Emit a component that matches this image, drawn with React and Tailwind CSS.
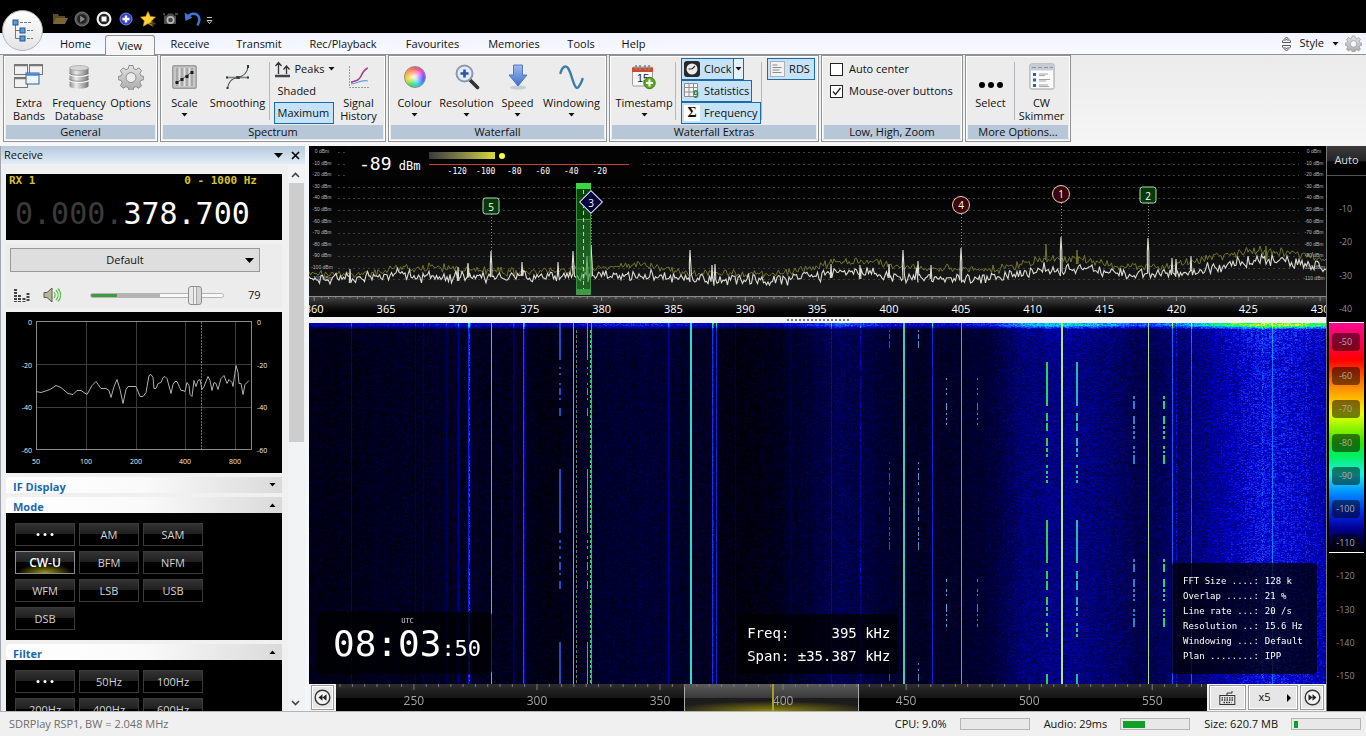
import { useEffect, useRef } from "react";

/* ---------- shared data and helpers ---------- */

const SPAN = 1017;
const pct = (x) => `${(x / SPAN) * 100}%`;
const freqX = (f) => 580 + (f - 400) * 14.37;

function makeRandom(seed) {
  let s = seed;
  return () => {
    s = (s * 1664525 + 1013904223) % 4294967296;
    return s / 4294967296;
  };
}

function lerpTable(table, x) {
  for (let i = 1; i < table.length; i++) {
    if (x <= table[i][0]) {
      const [x0, y0] = table[i - 1];
      const [x1, y1] = table[i];
      return y0 + ((y1 - y0) * (x - x0)) / (x1 - x0);
    }
  }
  return table[table.length - 1][1];
}

const LIVE_FLOOR = [[0, 134], [60, 132], [80, 129], [170, 131], [300, 129], [340, 130], [400, 134], [470, 134], [510, 128], [550, 126], [600, 132], [680, 133], [730, 124], [780, 123], [810, 128], [870, 128], [900, 124], [940, 114], [970, 114], [1017, 122]];
const MAX_FLOOR = [[0, 128], [60, 127], [90, 122], [130, 121], [200, 126], [270, 123], [330, 118], [370, 126], [440, 128], [480, 127], [510, 119], [550, 115], [610, 123], [690, 123], [730, 114], [770, 112], [810, 121], [860, 120], [900, 112], [940, 105], [980, 106], [1017, 112]];
const PEAKS = [[41, 123], [149, 121], [159, 117], [182, 105], [213, 116], [249, 116], [264, 105], [278, 110], [282, 99], [381, 104], [403, 119], [406, 118], [522, 118], [551, 119], [580, 118], [594, 104], [609, 115], [622, 119], [652, 102], [752, 91], [839, 92], [863, 112], [867, 113], [882, 110]];
const MAX_PEAKS = [[737, 98], [768, 104], [957, 100], [159, 118], [282, 100]];

function tracePath(table, peaks, seed, jitter) {
  const rnd = makeRandom(seed);
  let d = "";
  for (let x = 0; x <= SPAN; x += 1.5) {
    let y = lerpTable(table, x) + (rnd() + rnd() - 1) * jitter;
    if (rnd() > 0.93) y += (rnd() - 0.6) * jitter;
    d += `${d ? "L" : "M"}${x.toFixed(1)} ${y.toFixed(1)}`;
    const p = peaks.find(([px]) => px >= x && px < x + 1.5);
    if (p) d += `L${p[0] - 0.7} ${p[1] + 14}L${p[0]} ${p[1]}L${p[0] + 0.8} ${p[1] + 14}`;
  }
  return d;
}

const LIVE_PATH = tracePath(LIVE_FLOOR, PEAKS, 11, 7);
const MAX_PATH = tracePath(MAX_FLOOR, MAX_PEAKS, 77, 5);

/* ---------- waterfall ---------- */

const PALETTE = [[0, 0, 0, 4], [0.2, 0, 0, 85], [0.4, 0, 0, 205], [0.55, 20, 70, 255], [0.7, 0, 195, 255], [0.8, 0, 255, 130], [0.9, 110, 255, 20], [1, 230, 255, 90]];

function colour(v) {
  const t = Math.max(0, Math.min(1, v));
  for (let i = 1; i < PALETTE.length; i++) {
    if (t <= PALETTE[i][0]) {
      const a = PALETTE[i - 1];
      const b = PALETTE[i];
      const k = (t - a[0]) / (b[0] - a[0]);
      return [1, 2, 3].map((c) => a[c] + (b[c] - a[c]) * k);
    }
  }
  return [230, 255, 90];
}

const NOISE = [[0, 0.04], [90, 0.07], [150, 0.08], [250, 0.04], [280, 0.09], [340, 0.12], [400, 0.07], [430, 0.03], [465, 0.05], [500, 0.12], [530, 0.19], [560, 0.14], [600, 0.08], [640, 0.08], [680, 0.12], [710, 0.24], [755, 0.29], [800, 0.24], [830, 0.17], [870, 0.22], [900, 0.3], [930, 0.37], [948, 0.42], [975, 0.42], [1000, 0.37], [1017, 0.35]];

const LINES = [
  [42, 0.32], [106, 0.22], [114, 0.22], [137, 0.24], [149, 0.32], [159, 0.5], [160, 0.62, 1], [161, 0.24], [204, 0.26], [205, 0.2], [214, 0.58], [215, 0.4], [359, 0.33], [360, 0.24],
  [403, 0.54], [404, 0.48, 1], [407, 0.5], [426, 0.19], [481, 0.2], [522, 0.42], [551, 0.46, 1], [623, 0.5],
  [863, 0.6], [867, 0.5, 1], [882, 0.6], [897, 0.4, 1], [963, 0.64], [953, 0.62, 1], [954, 0.58, 1], [997, 0.54, 1],
];
const SOLID = [[182, 1, "#45b8e6"], [264, 1, "#49c6a0"], [282, 1, "#37b86c"], [381, 2, "#27ddd0"], [594, 2, "#45cdb4"], [652, 1, "#4ab878"], [752, 1, "#8cff5a"], [753, 1, "#b8e87a"], [839, 1, "#9fe0a0"]];

const SEG_A = [[0, 37], [44, 46], [50, 52], [60, 62], [65, 72], [75, 77], [85, 93], [146, 210], [217, 220], [223, 226], [233, 236], [239, 247], [250, 252], [258, 266], [319, 361]];
const SEG_B = [[7, 9], [11, 16], [18, 25], [139, 141], [145, 147], [150, 157], [159, 162], [169, 172], [175, 178], [184, 192], [194, 198], [204, 207], [209, 213], [215, 217], [219, 227], [340, 342], [346, 348], [351, 358]];
const SEG_C = [[55, 57], [65, 67], [70, 72], [80, 87], [90, 92], [95, 97], [100, 102], [256, 259], [266, 269], [271, 273], [281, 289], [291, 293], [296, 298], [301, 304]];
const SEG_D = [[39, 83], [90, 98], [100, 108], [115, 123], [125, 129], [131, 134], [142, 145], [148, 151], [153, 155], [157, 160], [197, 240], [248, 256], [258, 267], [274, 282], [284, 288], [290, 293], [300, 303], [305, 309], [311, 314], [351, 361]];
const SEG_E = [[73, 76], [78, 86], [93, 101], [103, 106], [108, 111], [113, 116], [123, 126], [128, 130], [132, 141], [236, 239], [241, 249], [256, 264], [266, 269], [271, 274], [276, 278], [286, 289], [291, 293], [295, 304]];
const DASHED = [[250, 2, SEG_A, "#1c50c8"], [278, 1, SEG_A, "#4c94d4"], [580, 1, SEG_B, "#2c56a8"], [609, 1, SEG_B, "#4c93c8"], [637, 1, SEG_C, "#50a4dc"], [668, 1, SEG_C, "#4a78c8"], [737, 2, SEG_D, "#2fd050"], [767, 2, SEG_D, "#22b6b4"], [824, 2, SEG_E, "#2c80c8"], [854, 2, SEG_E, "#1fd48c"]];

function paintWaterfall(canvas) {
  const w = canvas.width;
  const h = canvas.height;
  const ctx = canvas.getContext("2d");
  const img = ctx.createImageData(w, h);
  const rnd = makeRandom(2024);
  const extra = {};
  LINES.forEach(([x, v, dotted]) => (extra[x] = [v, dotted]));
  const column = [];
  for (let x = 0; x < w; x++) column.push(lerpTable(NOISE, x) + (rnd() - 0.5) * 0.03);
  for (let y = 0; y < h; y++) {
    let prev = 0;
    for (let x = 0; x < w; x++) {
      const base = column[x];
      const r = rnd();
      prev = x % 2 ? prev * 0.5 + r * 0.5 : r;
      let v = base + (prev - 0.5) * (0.13 + base * 0.3);
      if (extra[x]) v = extra[x][1] ? extra[x][0] - rnd() * 0.28 : extra[x][0] - rnd() * 0.06;
      if (y < 6) v += (0.27 + base * 0.6) * (y < 3 ? 1 : (7 - y) / 5);
      else if (y < 40) v += base * 0.15 * (1 - y / 40);
      const c = colour(v);
      const i = (y * w + x) * 4;
      img.data[i] = c[0];
      img.data[i + 1] = c[1];
      img.data[i + 2] = c[2];
      img.data[i + 3] = 255;
    }
  }
  ctx.putImageData(img, 0, 0);
  SOLID.forEach(([x, lw, c]) => {
    ctx.fillStyle = c;
    ctx.fillRect(x, 0, lw, h);
  });
  DASHED.forEach(([x, lw, segments, c]) => {
    ctx.fillStyle = c;
    segments.forEach(([a, b]) => ctx.fillRect(x, a, lw, b - a));
  });
  for (let y = 7; y < h; y += 5) {
    ctx.fillStyle = "#6a7a60";
    ctx.fillRect(267, y, 1, 3);
    ctx.fillStyle = "#2fe060";
    ctx.fillRect(281, y, 1, 3);
  }
}

function Waterfall() {
  const ref = useRef(null);
  useEffect(() => paintWaterfall(ref.current), []);
  return <canvas ref={ref} width={1017} height={361} aria-label="Waterfall" className="absolute inset-0 h-full w-full" />;
}

/* ---------- small glyphs ---------- */

const Down = ({ className = "" }) => (
  <svg width="7" height="4" viewBox="0 0 7 4" className={`shrink-0 ${className}`} aria-hidden="true"><path d="M0.5 0h6L3.5 3.6z" fill="currentColor" /></svg>
);

const Up = () => (
  <svg width="7" height="4" viewBox="0 0 7 4" aria-hidden="true"><path d="M0.5 4h6L3.5 0.4z" fill="#000" /></svg>
);

const Gear = ({ size = 26 }) => (
  <svg width={size} height={size} viewBox="0 0 26 26" aria-hidden="true">
    <defs><linearGradient id="gearFill" x1="0" y1="0" x2="0" y2="1"><stop offset="0" stopColor="#e4e4e4" /><stop offset="1" stopColor="#a9a9a9" /></linearGradient></defs>
    <path fillRule="evenodd" fill="url(#gearFill)" stroke="#8c8c8c" strokeWidth="1" strokeLinejoin="round" d="M11 1.5h4l.7 3.2 2.3 1 2.9-1.8 2.7 2.8-1.8 2.8 1 2.3 2.9.7v3.2l-2.9.8-1 2.3 1.8 2.8-2.7 2.7-2.9-1.7-2.3 1-.7 3h-4l-.7-3-2.3-1-2.9 1.7-2.7-2.7 1.8-2.8-1-2.3-2.9-.8v-3.2l2.9-.7 1-2.3-1.8-2.8 2.7-2.8 2.9 1.8 2.3-1zM13 8.6a5 5 0 1 0 0 10 5 5 0 1 0 0-10z" />
  </svg>
);

const icons = {
  bands: (
    <svg width="30" height="26" viewBox="0 0 30 26">
      <g fill="#f2f2f2" stroke="#777"><rect x=".5" y=".5" width="13" height="10" /><rect x="15.500" y=".5" width="13" height="10" /><rect x=".5" y="13.500" width="13" height="10" /></g>
      <path d="M0 1.500h14M15 1.500h14M0 14.500h14" stroke="#777" strokeWidth="1.500" />
      <rect x="12" y="9" width="13" height="11" fill="#eef5ff" stroke="#2f5f9f" /><path d="M12 10.500h13" stroke="#4a86d0" strokeWidth="2.500" />
    </svg>
  ),
  database: (
    <svg width="20" height="24" viewBox="0 0 20 24">
      <defs><linearGradient id="db"><stop offset="0" stopColor="#8f8f8f" /><stop offset=".35" stopColor="#ececec" /><stop offset="1" stopColor="#747474" /></linearGradient></defs>
      <path d="M.5 3v18c0 3.500 19 3.500 19 0V3z" fill="url(#db)" /><ellipse cx="10" cy="3" rx="9.500" ry="2.500" fill="#d6d6d6" stroke="#999" strokeWidth=".6" />
      <path d="M.5 9c0 3 19 3 19 0M.5 15c0 3 19 3 19 0" fill="none" stroke="#fff" strokeWidth="1.200" /><path d="M.5 8c0 3 19 3 19 0M.5 14c0 3 19 3 19 0" fill="none" stroke="#777" strokeWidth=".7" />
    </svg>
  ),
  options: <Gear size={26} />,
  scale: (
    <svg width="25" height="24" viewBox="0 0 25 24">
      <rect x=".7" y=".7" width="23.500" height="22.500" rx="1.500" fill="#c6c6c6" stroke="#9c9c9c" strokeWidth="1.400" />
      <path d="M5 3v18M10 3v18M15 3v18M20 3v18" stroke="#8a8a8a" /><path d="M7.500 3v18M12.500 3v18M17.500 3v18" stroke="#e2e2e2" />
      <path d="M5 17.500L20 7" stroke="#444" strokeWidth=".8" />
      <path d="M3.500 16h3v3h-3zM8.500 13h3v3h-3zM13.500 10h3v3h-3zM18.500 6h3v3h-3z" fill="#1c1c1c" />
    </svg>
  ),
  smoothing: (
    <svg width="26" height="26" viewBox="0 0 26 26" fill="none" stroke="#4d4d4d">
      <path d="M2 13.500h21" strokeWidth="1.600" stroke="#7d8587" /><path d="M2.500 24c2-8 5-9.500 10-10.500S22 10 23 3" strokeWidth="1.100" />
      <path d="M11.500 12.500h3v2h-3z" fill="#333" /><path d="M22 1h2v3h-2zM1.500 23h2v2h-2zM1 12.500h2v2H1zM22 12.500h2v2h-2z" fill="#333" stroke="none" />
    </svg>
  ),
  history: (
    <svg width="22" height="24" viewBox="0 0 22 24" fill="none">
      <path d="M1.500 1v21.500h20" stroke="#9a9a9a" strokeDasharray="2 1" /><path d="M3 17c6-1 8-2 10-6s3-7 7-8" stroke="#d0406a" strokeWidth="1.500" /><path d="M3 18c4-3 7-2 9-5s3-7 7-9" stroke="#8a3fb0" strokeWidth="1" /><path d="M3 19c6 0 10-5 17-3" stroke="#6a9be0" strokeWidth="1.200" />
    </svg>
  ),
  arrow: (
    <svg width="20" height="26" viewBox="0 0 20 26">
      <defs><linearGradient id="arrowFill" x1="0" y1="0" x2="0" y2="1"><stop offset="0" stopColor="#9dbdf0" /><stop offset="1" stopColor="#3f6fc8" /></linearGradient></defs>
      <ellipse cx="10" cy="23.500" rx="8" ry="2" fill="#c4ccd8" /><path d="M5.500 1h9v10H19l-9 11L1 11h4.500z" fill="url(#arrowFill)" stroke="#3d66b4" strokeWidth=".8" />
    </svg>
  ),
  zoom: (
    <svg width="26" height="26" viewBox="0 0 26 26">
      <path d="M16 16l7.500 7.500" stroke="#333" strokeWidth="3.600" strokeLinecap="round" /><circle cx="10.500" cy="9.500" r="8" fill="#e2ecfa" stroke="#8d98a8" strokeWidth="2" />
      <path d="M10.500 5.500v8M6.500 9.500h8" stroke="#2855a8" strokeWidth="2.600" />
    </svg>
  ),
  wave: (
    <svg width="25" height="26" viewBox="0 0 25 26"><path d="M1.500 9C4 1 8 0 11 8s5 19 8.500 15c2.500-3 3-5 4-8" fill="none" stroke="#3d7da8" strokeWidth="2.400" strokeLinecap="round" /></svg>
  ),
  calendar: (
    <svg width="26" height="26" viewBox="0 0 26 26">
      <rect x="1.500" y="3" width="20" height="19" rx="1.500" fill="#fafafa" stroke="#a59d97" /><path d="M1 3.500h21V8H1z" fill="#d24a2c" /><path d="M5 1v5M9 1v5M14 1v5M18 1v5" stroke="#7d8a90" strokeWidth="1.600" />
      <text x="6" y="18" fontSize="11" fontFamily="Liberation Sans, sans-serif" fill="#222">15</text>
      <circle cx="18.500" cy="19" r="5.700" fill="#5fa822" stroke="#3c7a12" /><path d="M18.500 15.500v7M15 19h7" stroke="#fff" strokeWidth="2" />
    </svg>
  ),
  skimmer: (
    <svg width="28" height="28" viewBox="0 0 28 28">
      <rect x="2" y="1" width="24" height="25" rx="1.500" fill="#fdfdfd" stroke="#979ba1" /><path d="M2.500 1.500h23v6h-23z" fill="#c5ccd6" /><path d="M4 4.500h4M10 4.500h4M16 4.500h4M22 4.500h3" stroke="#8b95a3" strokeWidth="1.200" />
      <path d="M5 10h3v3H5zM5 15.500h3v3H5zM5 21h3v3H5z" fill="#2c62ae" /><path d="M11 11h9M11 12.600h6M11 16.500h11M11 18h7M11 22h9M11 23.600h10" stroke="#a3a3a3" />
    </svg>
  ),
};

/* ---------- ribbon pieces ---------- */

function Group({ title, className, children }) {
  return (
    <section className={`flex h-[87px] flex-col border border-[#8f9193] bg-[#ececec] p-[2px] shadow-[inset_0_0_0_1px_#fff] ${className}`}>
      <div className="flex h-[67px] shrink-0 items-start justify-center">{children}</div>
      <h2 className="h-[14px] shrink-0 bg-[#b7c7d7] text-center leading-[14px]">{title}</h2>
    </section>
  );
}

function Tool({ icon, lines, menu, className = "w-[52px]" }) {
  return (
    <button type="button" className={`flex shrink-0 flex-col items-center pt-[3px] ${className}`}>
      <span className="flex h-8 items-center">{icon}</span>
      <span className="mt-[3px] leading-[13px]">
        {lines.map((l) => <span key={l} className="block whitespace-nowrap">{l}</span>)}
      </span>
      {menu && <Down className="mt-1" />}
    </button>
  );
}

const Divider = () => <span className="mt-1 h-[58px] w-px shrink-0 bg-[#b4b8bc]" />;
const ON = "border border-[#1c6aa8] bg-[#c6e2f7]";

function Ribbon() {
  return (
    <div className="flex h-[92px] shrink-0 gap-[2px] border-t border-[#8f9193] bg-linear-to-b from-[#ebebeb] to-[#f6f6f6] pl-[3px]">
      <Group title="General" className="w-[155px]">
        <Tool icon={icons.bands} lines={["Extra", "Bands"]} className="w-[46px]" />
        <Tool icon={icons.database} lines={["Frequency", "Database"]} className="w-[54px]" />
        <Tool icon={icons.options} lines={["Options"]} className="w-[49px]" />
      </Group>
      <Group title="Spectrum" className="w-[226px]">
        <Tool icon={icons.scale} lines={["Scale"]} menu className="w-[44px]" />
        <Tool icon={icons.smoothing} lines={["Smoothing"]} className="w-[62px]" />
        <Divider />
        <div className="ml-1 flex w-[60px] shrink-0 flex-col">
          <button type="button" className="flex h-[22px] items-center gap-1 whitespace-nowrap">
            <svg width="17" height="17" viewBox="0 0 17 17" fill="none" stroke="#333" className="shrink-0" aria-hidden="true"><path d="M4.500 13V2M1.500 5l3-3.500 3 3.500M12.500 13V5M9.500 8.500l3-3.500 3 3.500" strokeWidth="1.300" /><path d="M1 15h15" strokeWidth="2.500" stroke="#40474c" /></svg>
            Peaks<Down />
          </button>
          <button type="button" className="h-[22px] pl-1 text-left">Shaded</button>
          <button type="button" aria-pressed="true" className={`h-[22px] pl-[3px] text-left ${ON}`}>Maximum</button>
        </div>
        <Tool icon={icons.history} lines={["Signal", "History"]} className="w-[50px]" />
      </Group>
      <Group title="Waterfall" className="w-[219px]">
        <Tool icon={<span className="h-[22px] w-[22px] rounded-full border border-[#8b8b8b] bg-[radial-gradient(circle,#ffffffd0_10%,#ffffff00_60%),conic-gradient(#ff5a5a,#e048e0,#5a5aff,#30c8f0,#40e060,#f0e030,#ff9a4a,#ff5a5a)]" />} lines={["Colour"]} menu className="w-[46px]" />
        <Tool icon={icons.zoom} lines={["Resolution"]} menu className="w-[58px]" />
        <Tool icon={icons.arrow} lines={["Speed"]} menu className="w-[44px]" />
        <Tool icon={icons.wave} lines={["Windowing"]} menu className="w-[64px]" />
      </Group>
      <Group title="Waterfall Extras" className="w-[210px]">
        <Tool icon={icons.calendar} lines={["Timestamp"]} menu className="w-[62px]" />
        <Divider />
        <div className="ml-[5px] flex w-[80px] shrink-0 flex-col items-start">
          <div className={`flex h-[22px] ${ON}`}>
            <button type="button" className="flex items-center gap-1 pl-[2px] pr-[2px]">
              <svg width="16" height="16" viewBox="0 0 16 16" aria-hidden="true"><rect width="16" height="16" rx="3" fill="#26282a" /><circle cx="8" cy="8" r="5.500" fill="#ececec" /><path d="M8 8l3-3M8 8H4.500" stroke="#333" strokeWidth="1.200" /></svg>
              Clock
            </button>
            <button type="button" aria-label="Clock options" className="border-l border-[#1c6aa8] bg-[#e5f1fb] px-px"><Down /></button>
          </div>
          <button type="button" aria-pressed="true" className={`flex h-[22px] items-center gap-1 pl-[2px] pr-[2px] ${ON}`}>
            <svg width="16" height="16" viewBox="0 0 16 16" aria-hidden="true"><path d="M.5.5h13v13H.5zM.5 4.500h13M.5 9h13M5 .5v13M9.500.5v13" fill="#f4f4f4" stroke="#8a8f94" /><text x="9" y="15" fontSize="10" fontWeight="700" fontFamily="Liberation Sans, sans-serif" fill="#2f7d46">9</text></svg>
            Statistics
          </button>
          <button type="button" aria-pressed="true" className={`flex h-[22px] items-center gap-1 pl-[2px] pr-[2px] ${ON}`}>
            <span className="flex h-4 w-4 items-center justify-center bg-white font-['Liberation_Serif',serif] text-[14px] font-bold leading-none">Σ</span>
            Frequency
          </button>
        </div>
        <Divider />
        <button type="button" aria-pressed="true" className={`ml-[5px] flex h-[22px] items-center gap-1 pl-[2px] pr-1 ${ON}`}>
          <svg width="15" height="16" viewBox="0 0 15 16" aria-hidden="true"><rect x=".5" y=".5" width="14" height="15" fill="#f2f2f2" stroke="#b0b0b0" /><path d="M2.500 4h5M2.500 6.500h9M2.500 9h7M2.500 11.500h9" stroke="#8b8b8b" /></svg>
          RDS
        </button>
      </Group>
      <Group title="Low, High, Zoom" className="w-[142px]">
        <div className="flex w-full flex-col pl-[6px]">
          <Check id="auto-center" label="Auto center" />
          <Check id="mouse-over" label="Mouse-over buttons" checked />
        </div>
      </Group>
      <Group title="More Options..." className="w-[106px]">
        <Tool icon={<svg width="26" height="8" viewBox="0 0 26 8" className="mt-4"><circle cx="4" cy="4" r="3" /><circle cx="13" cy="4" r="3" /><circle cx="22" cy="4" r="3" /></svg>} lines={["Select"]} className="w-[46px]" />
        <Divider />
        <Tool icon={icons.skimmer} lines={["CW", "Skimmer"]} className="w-[54px]" />
      </Group>
    </div>
  );
}

function Check({ id, label, checked = false }) {
  return (
    <div className="flex h-[22px] items-center gap-[6px]">
      <span className="grid">
        <input id={id} type="checkbox" defaultChecked={checked} className="peer col-start-1 row-start-1 h-[13px] w-[13px] appearance-none border border-[#222] bg-white" />
        <svg viewBox="0 0 13 13" className="pointer-events-none invisible col-start-1 row-start-1 h-[13px] w-[13px] peer-checked:visible" aria-hidden="true"><path d="M3 6.500L5.500 9.500 10.500 3" fill="none" stroke="#222" strokeWidth="1.300" /></svg>
      </span>
      <label htmlFor={id} className="whitespace-nowrap">{label}</label>
    </div>
  );
}

const TABS = [["Home", "w-[59px]"], ["View", "w-[50px]"], ["Receive", "w-[70px]"], ["Transmit", "w-[68px]"], ["Rec/Playback", "w-[100px]"], ["Favourites", "w-[79px]"], ["Memories", "w-[84px]"], ["Tools", "w-[50px]"], ["Help", "w-[55px]"]];

function TitleBar() {
  return (
    <header className="relative shrink-0">
      <div className="flex h-[33px] items-center gap-[6px] bg-black pl-[52px] pt-1">
        <button type="button" aria-label="Open" className="h-4 w-4"><svg width="16" height="16" viewBox="0 0 16 16"><path d="M1 13V3h5l1 2h6v3" fill="#5c4a22" /><path d="M1 13l3-6h12l-3 6z" fill="#7b6536" /></svg></button>
        <button type="button" aria-label="Play" className="h-4 w-4"><svg width="16" height="16" viewBox="0 0 16 16"><circle cx="8" cy="8" r="7" fill="#555" stroke="#7a7a7a" /><circle cx="8" cy="8" r="4.800" fill="#222" /><path d="M6.200 4.800v6.400L11 8z" fill="#8d8d8d" /></svg></button>
        <button type="button" aria-label="Stop" className="h-4 w-4"><svg width="16" height="16" viewBox="0 0 16 16"><circle cx="8" cy="8" r="7.500" fill="#efefef" /><circle cx="8" cy="8" r="5.300" fill="#222" /><rect x="5.500" y="5.500" width="5" height="5" fill="#fff" /></svg></button>
        <button type="button" aria-label="Add" className="h-4 w-4"><svg width="16" height="16" viewBox="0 0 16 16"><circle cx="8" cy="8" r="6" fill="#3442c0" stroke="#7d88e0" /><path d="M8 4.500v7M4.500 8h7" stroke="#fff" strokeWidth="2.400" /></svg></button>
        <button type="button" aria-label="Add favourite" className="h-4 w-4"><svg width="16" height="16" viewBox="0 0 16 16"><path d="M8 .5l2.300 4.900 5.200.7-3.800 3.700 1 5.400L8 12.600l-4.700 2.600 1-5.400L.5 6.100l5.200-.7z" fill="#ffd23c" stroke="#c89018" strokeWidth=".6" /><path d="M12.500 9.500v6M9.500 12.500h6" stroke="#57431c" strokeWidth="1.800" /></svg></button>
        <button type="button" aria-label="Screenshot" className="h-4 w-4"><svg width="16" height="16" viewBox="0 0 16 16"><path d="M2 4.500h3l1-2h5l1 2h2V13H2z" fill="#4c4c4c" /><circle cx="8.500" cy="9" r="4" fill="#b8b8b8" /><circle cx="8.500" cy="9" r="2.300" fill="#444" /><path d="M1 3h2M13 3h3" stroke="#888" /></svg></button>
        <button type="button" aria-label="Undo" className="h-4 w-4"><svg width="17" height="16" viewBox="0 0 17 16"><path d="M4 5.500C10-.5 19 4 13.500 14.500" fill="none" stroke="#3f74d2" strokeWidth="2.600" /><path d="M.5 1.500l1 8.500 7-3.500z" fill="#3f74d2" /></svg></button>
        <button type="button" aria-label="Customize" className="h-4 w-2"><svg width="7" height="8" viewBox="0 0 7 8" className="mt-1"><path d="M1 .5h5M1 3.500h5L3.500 6.500z" fill="none" stroke="#c8c8c8" /></svg></button>
      </div>
      <nav className="flex h-[21px] items-stretch bg-linear-to-b from-[#f0f3ff] to-[#f7faff] pl-[46px]">
        {TABS.map(([name, w]) => (
          <button key={name} type="button" className={`${w} text-center ${name === "View" ? "mt-[2px] h-5 rounded-t-[3px] border border-b-0 border-[#8f9193] bg-[#f6f6f6] leading-[14px]" : "leading-[20px]"}`}>{name}</button>
        ))}
        <div className="ml-auto flex items-center gap-2 pr-1">
          <svg width="11" height="16" viewBox="0 0 11 16" fill="none" stroke="#555" aria-hidden="true"><path d="M5.500 1L9.500 5v1.500h-8V5zM5.500 15l4-4V9.500h-8V11z" /><path d="M3.500 5l2-2 2 2M3.500 11l2 2 2-2" /></svg>
          <button type="button" className="flex items-center gap-2">Style<Down /></button>
          <button type="button" aria-label="Settings" className="-ml-[2px]"><Gear size={17} /></button>
        </div>
      </nav>
      <button type="button" aria-label="Main menu" className="absolute left-[2px] top-[10px] flex h-[41px] w-[41px] items-center justify-center rounded-full border border-[#b4b4b4] bg-linear-to-b from-white to-[#e4e4e4]">
        <svg width="22" height="24" viewBox="0 0 22 24" fill="none" stroke="#777"><path d="M3.500 5v14.500H10M3.500 11.500H10" /><path d="M8 3.500h12M15 11.500h6M15 19.500h6" strokeDasharray="3 1" /><g fill="#5c9ad6" stroke="#22588f"><rect x="1" y="1" width="5" height="5" /><rect x="8" y="9" width="5" height="5" /><rect x="8" y="17" width="5" height="5" /></g></svg>
      </button>
    </header>
  );
}

/* ---------- receive panel ---------- */

function PadButton({ children, active }) {
  return (
    <button
      type="button"
      className={`h-[23px] w-[60px] border leading-[21px] ${active ? "border-[#8c8c8c] bg-[radial-gradient(ellipse_28px_9px_at_50%_100%,#a09a10,#00000000),linear-gradient(#363636,#222_48%,#000_50%)] text-[12px] font-semibold text-white" : "border-[#3a3a3a] bg-[linear-gradient(#333,#1f1f1f_48%,#000_50%)] text-[11px] text-[#d4d4d4]"}`}
    >
      {children}
    </button>
  );
}

const Dots = () => (
  <svg width="20" height="5" viewBox="0 0 20 5" fill="#fff" className="mx-auto" aria-label="More"><circle cx="3" cy="2.500" r="1.500" /><circle cx="10" cy="2.500" r="1.500" /><circle cx="17" cy="2.500" r="1.500" /></svg>
);

function Section({ title, open, className = "" }) {
  return (
    <button type="button" className={`flex h-4 w-full shrink-0 items-center justify-between rounded-tl bg-linear-to-r from-white via-[#fafafa] to-[#dadada] pl-[7px] pr-[6px] text-[11px] font-bold leading-4 text-[#1a69ae] ${className}`}>
      <span className="pt-1">{title}</span>
      {open ? <Up /> : <Down className="text-black" />}
    </button>
  );
}

const AUDIO = "M36 391.500l5 1 9-3 6-4 5 2 7 6 5 1 4-4h4l6 4 5-9 4-4 5 7h5l3 2 2 7 3-11 3-7 3 10 3 14 3-14 2-3h8l4 10h3l3-4 3-17 2-1 2 3 1 11h2l2-5 3-1 2-5 2-1 2 2 4 15 2-9 2-3h2l4 9h2l2 1 2-9 2 3 1 9 2 2 2-16 2 6 2-6 2-1 2 10 2-3 4-10 2 4 2 10 2-8 2 1 2 6 3-11 3-3 3 8 2-4 3 3 1 4 3-21 2 7 1 11h2l2 11 2-10 4-4";

function AudioChart() {
  const xs = [["50", 36], ["100", 86], ["200", 136], ["400", 185], ["800", 235]];
  return (
    <svg viewBox="6 312 276 161" className="block h-[161px] w-full shrink-0 bg-black" role="img" aria-label="Audio spectrum">
      <g fill="none" stroke="#3c3c3c"><path d="M86.500 322v127.500M136.500 322v127.500M185.500 322v127.500M235.500 322v127.500M36 364.500h215M36 407.500h215" /></g>
      <rect x="36.500" y="321.500" width="215" height="128" fill="none" stroke="#8a8a8a" />
      <path d="M201.500 322v127" stroke="#77773c" strokeDasharray="2 1" />
      <path d={AUDIO} fill="none" stroke="#b0b0b0" />
      <g fill="#eee" fontSize="7" fontFamily="Open Sans, sans-serif">
        {["0", "-20", "-40", "-60"].map((t, i) => (
          <g key={t}><text x="32" y={325 + i * 42.500} textAnchor="end">{t}</text><text x="257" y={325 + i * 42.500}>{t}</text></g>
        ))}
        {xs.map(([t, x]) => <text key={t} x={x} y="464" textAnchor="middle">{t}</text>)}
      </g>
    </svg>
  );
}

function ReceivePanel() {
  return (
    <aside className="flex w-[305px] shrink-0 flex-col border-l border-[#a0a6ac] bg-[#f2f3f5]">
      <div className="flex h-[18px] shrink-0 items-center bg-linear-to-b from-[#b4c9dc] to-[#e3edf6] pl-[3px] pr-[5px]">
        <h2 className="flex-1">Receive</h2>
        <button type="button" aria-label="Panel menu"><svg width="9" height="5" viewBox="0 0 9 5"><path d="M0 0h9L4.500 5z" /></svg></button>
        <button type="button" aria-label="Close panel" className="ml-2"><svg width="9" height="9" viewBox="0 0 9 9"><path d="M1 1l7 7M8 1L1 8" stroke="#000" strokeWidth="1.600" /></svg></button>
      </div>
      <div className="flex min-h-0 flex-1">
        <div className="flex min-h-0 w-[287px] shrink-0 flex-col overflow-hidden bg-[#f0f0f0] pl-[5px] pr-[6px] pt-[10px]">
          <div className="h-[66px] shrink-0 bg-black font-['DejaVu_Sans_Mono',monospace]">
            <div className="flex justify-between pl-[3px] pr-[25px] text-[11px] font-bold leading-[14px] text-[#d8c428]"><span>RX 1</span><span>0 - 1000 Hz</span></div>
            <div className="mt-2 whitespace-nowrap pl-[9px] text-[30px] leading-9"><span className="text-[#3a3a3a]">0.000.</span><span className="text-white">378.700</span></div>
          </div>
          <div className="mt-1 h-[64px] shrink-0 bg-[#ececec] px-1 pt-1">
            <div className="grid w-[250px] items-center">
              <select aria-label="Audio output" className="col-start-1 row-start-1 h-6 appearance-none border border-[#9a9a9a] bg-[#dedede] pr-5 text-center text-[11px]"><option>Default</option></select>
              <svg width="9" height="5" viewBox="0 0 9 5" className="pointer-events-none col-start-1 row-start-1 mr-[6px] justify-self-end"><path d="M0 0h9L4.500 5z" /></svg>
            </div>
            <div className="mt-[13px] flex h-5 items-center pl-1">
              <svg width="16" height="13" viewBox="0 0 16 13" aria-hidden="true"><path d="M1.500 0v13M5.500 6v7M10 9v4M14 4v9" stroke="#444" strokeWidth="3" strokeDasharray="2 1" /></svg>
              <button type="button" aria-label="Mute" className="ml-[13px]"><svg width="18" height="16" viewBox="0 0 18 16"><path d="M1 5.500h3L9 1v14l-5-4.500H1z" fill="#b9b49c" stroke="#5b5a50" /><path d="M11 5c1.500 2 1.500 4 0 6M13 3c2.700 3 2.700 7 0 10M15 1.500c3.300 4 3.300 9 0 13" fill="none" stroke="#5cc24c" strokeWidth="1.200" /></svg></button>
              <input
                type="range" aria-label="Volume" defaultValue={82}
                className="ml-[29px] h-5 w-[134px] appearance-none bg-transparent [&::-webkit-slider-runnable-track]:h-[5px] [&::-webkit-slider-runnable-track]:rounded-sm [&::-webkit-slider-runnable-track]:border [&::-webkit-slider-runnable-track]:border-[#b4b4b4] [&::-webkit-slider-runnable-track]:bg-[linear-gradient(90deg,#3f9a40_20%,#b4b4b4_20%,#b4b4b4_52%,#f8f8f8_52%)] [&::-webkit-slider-thumb]:-mt-2 [&::-webkit-slider-thumb]:h-[19px] [&::-webkit-slider-thumb]:w-[14px] [&::-webkit-slider-thumb]:appearance-none [&::-webkit-slider-thumb]:rounded-[3px] [&::-webkit-slider-thumb]:border [&::-webkit-slider-thumb]:border-[#8f8f8f] [&::-webkit-slider-thumb]:bg-[linear-gradient(90deg,#e8e8e8_35%,#aaa_35%,#aaa_45%,#eee_45%,#eee_55%,#aaa_55%,#aaa_65%,#d4d4d4_65%)]"
              />
              <output className="ml-6 text-[11px]">79</output>
            </div>
          </div>
          <div className="mt-1 shrink-0"><AudioChart /></div>
          <Section title="IF Display" className="mt-1" />
          <Section title="Mode" open className="mt-1" />
          <div className="h-[127px] shrink-0 bg-black pl-[9px] pt-[10px]">
            <div className="grid w-[188px] grid-cols-3 gap-x-1 gap-y-[5px]">
              <PadButton><Dots /></PadButton><PadButton>AM</PadButton><PadButton>SAM</PadButton>
              <PadButton active>CW-U</PadButton><PadButton>BFM</PadButton><PadButton>NFM</PadButton>
              <PadButton>WFM</PadButton><PadButton>LSB</PadButton><PadButton>USB</PadButton>
              <PadButton>DSB</PadButton>
            </div>
          </div>
          <Section title="Filter" open className="mt-1" />
          <div className="min-h-0 flex-1 overflow-hidden bg-black pl-[9px] pt-[10px]">
            <div className="grid w-[188px] grid-cols-3 gap-x-1 gap-y-[5px]">
              <PadButton><Dots /></PadButton><PadButton>50Hz</PadButton><PadButton>100Hz</PadButton>
              <PadButton>200Hz</PadButton><PadButton>400Hz</PadButton><PadButton>600Hz</PadButton>
            </div>
          </div>
        </div>
        <div className="flex w-4 flex-col items-center">
          <svg width="16" height="19" viewBox="0 0 16 19" fill="none" stroke="#444" strokeWidth="1.600" aria-hidden="true"><path d="M4 13l3.500-3.500L11 13" /></svg>
          <div className="h-[259px] w-[15px] bg-[#cdcdcd]" />
          <svg width="16" height="17" viewBox="0 0 16 17" fill="none" stroke="#444" strokeWidth="1.600" className="mt-auto" aria-hidden="true"><path d="M4 7l3.500 3.500L11 7" /></svg>
        </div>
      </div>
    </aside>
  );
}

/* ---------- spectrum ---------- */

function Marker({ x, y, n, shape }) {
  const shapes = {
    square: "h-[17px] w-[17px] rounded-[3px] border border-[#b8d8b8] bg-[#063a0a]",
    circle: "h-[18px] w-[18px] rounded-full border border-[#e8d0d0] bg-[#3c0206]",
    diamond: "h-[17px] w-[17px] rotate-45 border border-[#e0e0f0] bg-[#04043c]",
  };
  return (
    <div className="absolute grid -translate-x-1/2 -translate-y-1/2 place-items-center" style={{ left: pct(x), top: y }}>
      <span className={`col-start-1 row-start-1 ${shapes[shape]}`} />
      <span className="z-10 col-start-1 row-start-1 text-[10px] leading-none text-white">{n}</span>
    </div>
  );
}

const DBM = ["0 dBm", "-10 dBm", "-20 dBm", "-30 dBm", "-40 dBm", "-50 dBm", "-60 dBm", "-70 dBm", "-80 dBm", "-90 dBm", "-100 dBm", "-110 dBm"];

function DbmColumn({ className }) {
  return (
    <div className={`absolute top-0 flex h-[139px] flex-col font-['Liberation_Sans',sans-serif] text-[5px] text-[#b8b8b8] ${className}`}>
      {DBM.map((t) => <span key={t} className="flex flex-1 items-center justify-center">{t}</span>)}
    </div>
  );
}

function Spectrum() {
  return (
    <div className="relative h-[150px] shrink-0 overflow-hidden bg-linear-to-b from-black via-[#0a0a0a] to-[#1a1a1a]">
      <svg viewBox="0 0 1017 150" preserveAspectRatio="none" className="absolute inset-0 h-full w-full" role="img" aria-label="Spectrum">
        <g stroke="#3f3f3f" strokeDasharray="2 3">{DBM.map((t, i) => <path key={t} d={`M29 ${Math.round(6 + i * 11.550) + 0.5}H990`} />)}</g>
        <g stroke="#8c8c8c" strokeDasharray="1 2"><path d="M182.500 68v38M652.500 68v36M752.500 57v34M839.500 57v35M282.500 66v34" /></g>
        <path d={MAX_PATH} fill="none" stroke="#74752a" />
        <path d={LIVE_PATH} fill="none" stroke="#dcdcd4" strokeWidth="1.100" />
        <rect x="267" y="37" width="15" height="111" fill="#0a7a10" fillOpacity=".55" /><rect x="267" y="73" width="15" height="70" fill="#9fe89f" fillOpacity=".12" />
        <path d="M267.500 37v111M281.500 37v111M267 73.500h15" stroke="#3c9440" />
        <path d="M274.500 44v99" stroke="#b4d4b4" strokeDasharray="4 3" />
        <rect x="267" y="37" width="15" height="6" fill="#38d840" /><rect x="267" y="143" width="15" height="6" fill="#3f9a48" />
      </svg>
      <DbmColumn className="left-0 w-[26px]" />
      <DbmColumn className="right-0 w-[24px]" />
      <div className="absolute left-[36px] top-0 flex h-[35px] w-[296px] items-start bg-[#030303] text-white">
        <div className="w-[84px] whitespace-nowrap pl-[14px] pt-[6px] font-['DejaVu_Sans_Mono',monospace] text-[12px] leading-6"><span className="text-[18px]">-89</span> dBm</div>
        <div className="w-[200px] pt-[6px]">
          <div className="flex items-center gap-1"><span className="h-[7px] w-[66px] bg-linear-to-r from-[#3a3a3a] to-[#d8d832]" /><span className="h-[6px] w-[6px] rounded-full bg-[#fdfd4a]" /></div>
          <div className="mt-[5px] h-px bg-[#c0403a]" />
          <div className="flex w-[185px] pl-[14px] font-['DejaVu_Sans_Mono',monospace] text-[8px] leading-[14px]">{["-120", "-100", "-80", "-60", "-40", "-20"].map((t) => <span key={t} className="flex-1 basis-0 text-center">{t}</span>)}</div>
        </div>
      </div>
      <Marker x={182} y={60} n="5" shape="square" />
      <Marker x={282} y={56} n="3" shape="diamond" />
      <Marker x={652} y={59} n="4" shape="circle" />
      <Marker x={752} y={48} n="1" shape="circle" />
      <Marker x={839} y={49} n="2" shape="square" />
    </div>
  );
}

function FrequencyRuler() {
  const ticks = [];
  for (let f = 360; f <= 430.5; f += 0.5) ticks.push(f);
  const labels = [360, 365, 370, 375, 380, 385, 390, 395, 400, 405, 410, 415, 420, 425, 430];
  return (
    <div className="relative h-[21px] shrink-0 overflow-hidden bg-linear-to-b from-[#4a4a4a] via-[#161616] to-black text-white">
      <svg className="absolute inset-0 h-full w-full" aria-hidden="true">
        <path d="M0 .5H3000" stroke="#8a8a8a" />
        {ticks.map((f) => <line key={f} x1={pct(freqX(f))} x2={pct(freqX(f))} y1="0" y2={f % 5 === 0 ? 5 : f % 1 === 0 ? 3 : 2} stroke="#8a8a8a" />)}
      </svg>
      {labels.map((f) => <span key={f} className="absolute top-[6px] -translate-x-1/2 text-[11px] leading-[14px]" style={{ left: pct(freqX(f)) }}>{f}</span>)}
    </div>
  );
}

const STATS = [["FFT Size ....:", "128 k"], ["Overlap .....:", "21 %"], ["Line rate ...:", "20 /s"], ["Resolution ..:", "15.6 Hz"], ["Windowing ...:", "Default"], ["Plan ........:", "IPP"]];

function BandNavigator() {
  const ticks = [];
  for (let f = 220; f <= 570; f += 5) ticks.push(f);
  const at = (f) => `${((78 + (f - 250) * 2.464) / 872) * 100}%`;
  const NAV = "flex items-center justify-center border border-[#9a9a9a] bg-[#e6e6e6] shadow-[inset_0_0_0_1px_#fff]";
  return (
    <div className="flex h-[27px] shrink-0 gap-[2px] bg-[#f2f2f2]">
      <button type="button" aria-label="Band down" className={`my-px ml-[2px] w-[23px] ${NAV}`}>
        <svg width="17" height="17" viewBox="0 0 17 17"><circle cx="8.500" cy="8.500" r="7.300" fill="#f4f4f4" stroke="#333" strokeWidth="1.400" /><path d="M8.500 5.200v6.600L4.500 8.500zM12.500 5.200v6.600L8.500 8.500z" fill="#222" /></svg>
      </button>
      <div className="relative flex-1 overflow-hidden bg-[linear-gradient(#2e2e2e,#141414_50%,#000_52%)] text-[#a4a4a4]">
        <div className="absolute inset-y-0 left-[39.9%] w-[20.1%] border-x border-[#aaa] bg-[radial-gradient(ellipse_60%_10px_at_50%_100%,#8c860c,#00000000),linear-gradient(#5c5c5c,#3a3a3a_50%,#1c1c1c_52%)]" />
        <div className="absolute inset-y-0 left-[50%] w-[2px] bg-[#a8a020]" />
        <svg className="absolute inset-0 h-full w-full" aria-hidden="true">{ticks.map((f) => <line key={f} x1={at(f)} x2={at(f)} y1="0" y2={f % 50 === 0 ? 6 : 3} stroke="#7c7c7c" />)}</svg>
        {[250, 300, 350, 400, 450, 500, 550].map((f) => <span key={f} className="absolute top-[8px] -translate-x-1/2 text-[12px] leading-[18px]" style={{ left: at(f) }}>{f}</span>)}
      </div>
      <button type="button" aria-label="Keyboard entry" className={`my-px w-[37px] ${NAV}`}>
        <svg width="17" height="14" viewBox="0 0 17 14" fill="none" stroke="#333"><path d="M8 4V2h5V0" /><rect x=".8" y="4.500" width="15" height="9" /><path d="M2.500 6.800h12M2.500 9h12M4.500 11.500h8" strokeDasharray="1.500 1" strokeWidth="1.300" /></svg>
      </button>
      <button type="button" className={`my-px w-[50px] gap-4 pl-[3px] ${NAV}`}>x5<svg width="4" height="8" viewBox="0 0 4 8"><path d="M0 0v8l4-4z" /></svg></button>
      <button type="button" aria-label="Band up" className={`my-px mr-[2px] w-[24px] ${NAV}`}>
        <svg width="17" height="17" viewBox="0 0 17 17"><circle cx="8.500" cy="8.500" r="7.300" fill="#f4f4f4" stroke="#333" strokeWidth="1.400" /><path d="M8.500 5.200v6.600l4-3.300zM4.500 5.200v6.600l4-3.300z" fill="#222" /></svg>
      </button>
    </div>
  );
}

const LEVELS = [-10, -20, -30, -40, -50, -60, -70, -80, -90, -100, -110, -120, -130, -140, -150];

function ColourScale() {
  return (
    <div className="relative flex w-[40px] shrink-0 flex-col border-l border-[#777] bg-black text-[#8c8c8c]">
      <button type="button" className="h-[30px] border-b border-[#555] bg-[linear-gradient(#3c3c3c,#242424_52%,#000_54%)] text-[11px] text-[#dcdcdc]">Auto</button>
      <div className="absolute left-[2px] right-[2px] top-[176px] h-[231px] border-y border-white bg-[linear-gradient(#ff0a8c,#ff0050_9%,#ff0000_16%,#ff7800_26%,#ffd800_36%,#e8ff00_40%,#30e800_52%,#00f060_58%,#20f0e8_66%,#0090ff_74%,#0028e8_83%,#000090_90%,#000_100%)]" />
      <div className="relative mt-4 flex h-[501px] flex-col pr-[2px] text-[9px]">
        {LEVELS.map((v) => (
          <span key={v} className="flex flex-1 items-center justify-center">
            <span className={v <= -50 && v >= -110 ? "h-[18px] w-[28px] rounded bg-black/50 text-center leading-[18px] text-[#b0a8a0]" : "leading-[18px]"}>{v}</span>
          </span>
        ))}
      </div>
    </div>
  );
}

function Meter({ label, children }) {
  return (
    <div className="flex items-center gap-[13px]">
      <span>{label}</span>
      <span className="flex h-3 w-[70px] items-center border border-[#b4b4b4] bg-[#e8e8e8] pl-[2px]">{children}</span>
    </div>
  );
}

export default function App() {
  return (
    <div className="flex h-screen min-w-[1100px] flex-col overflow-hidden bg-[#f3f6fb] font-['Open_Sans','Noto_Sans',sans-serif] text-[11px] text-[#111]">
      <TitleBar />
      <Ribbon />
      <main className="flex min-h-0 flex-1">
        <ReceivePanel />
        <div className="ml-1 flex min-w-0 flex-1 bg-[#f3f3f3]">
          <div className="flex min-w-0 flex-1 flex-col">
            <Spectrum />
            <FrequencyRuler />
            <div className="flex h-[6px] shrink-0 items-center justify-center"><span className="h-[2px] w-[62px] bg-[repeating-linear-gradient(90deg,#777_0_2px,#0000_2px_4px)]" /></div>
            <div className="relative min-h-0 flex-1 overflow-hidden bg-black font-['DejaVu_Sans_Mono',monospace] text-white">
              <Waterfall />
              <div className="absolute bottom-[10px] left-[8px] h-[62px] w-[175px] rounded bg-black/75 pl-4 pt-1">
                <div className="w-[149px] text-center text-[7px] leading-[10px] text-[#ccc]">UTC</div>
                <div className="whitespace-nowrap text-[36px] leading-9">08:03<span className="text-[22px]">:50</span></div>
              </div>
              <div className="absolute bottom-[10px] left-[42.2%] h-[60px] w-[159px] whitespace-pre rounded bg-black/75 pl-[9px] pt-2 text-[14px] leading-[23px]">
                <div>Freq:     395 kHz</div>
                <div>Span: ±35.387 kHz</div>
              </div>
              <dl className="absolute bottom-[10px] right-[9px] h-[111px] w-[146px] whitespace-pre rounded bg-black/75 pl-3 pt-[11px] text-[9px] leading-[15px]">
                {STATS.map(([k, v]) => <div key={k} className="flex gap-[6px]"><dt>{k}</dt><dd>{v}</dd></div>)}
              </dl>
            </div>
            <BandNavigator />
          </div>
          <ColourScale />
        </div>
      </main>
      <footer className="flex h-[25px] shrink-0 items-center justify-between border-t border-[#b4b4b4] bg-[#f0f0f0] pl-[9px] pr-[5px]">
        <span className="text-[#6c6c6c]">SDRPlay RSP1, BW = 2.048 MHz</span>
        <div className="flex gap-[14px]">
          <Meter label="CPU: 9.0%" />
          <Meter label="Audio: 29ms"><span className="h-[7px] w-[22px] bg-[#10a028]" /></Meter>
          <Meter label="Size: 620.7 MB"><span className="h-[7px] w-1 bg-[#10a028]" /></Meter>
        </div>
      </footer>
    </div>
  );
}
